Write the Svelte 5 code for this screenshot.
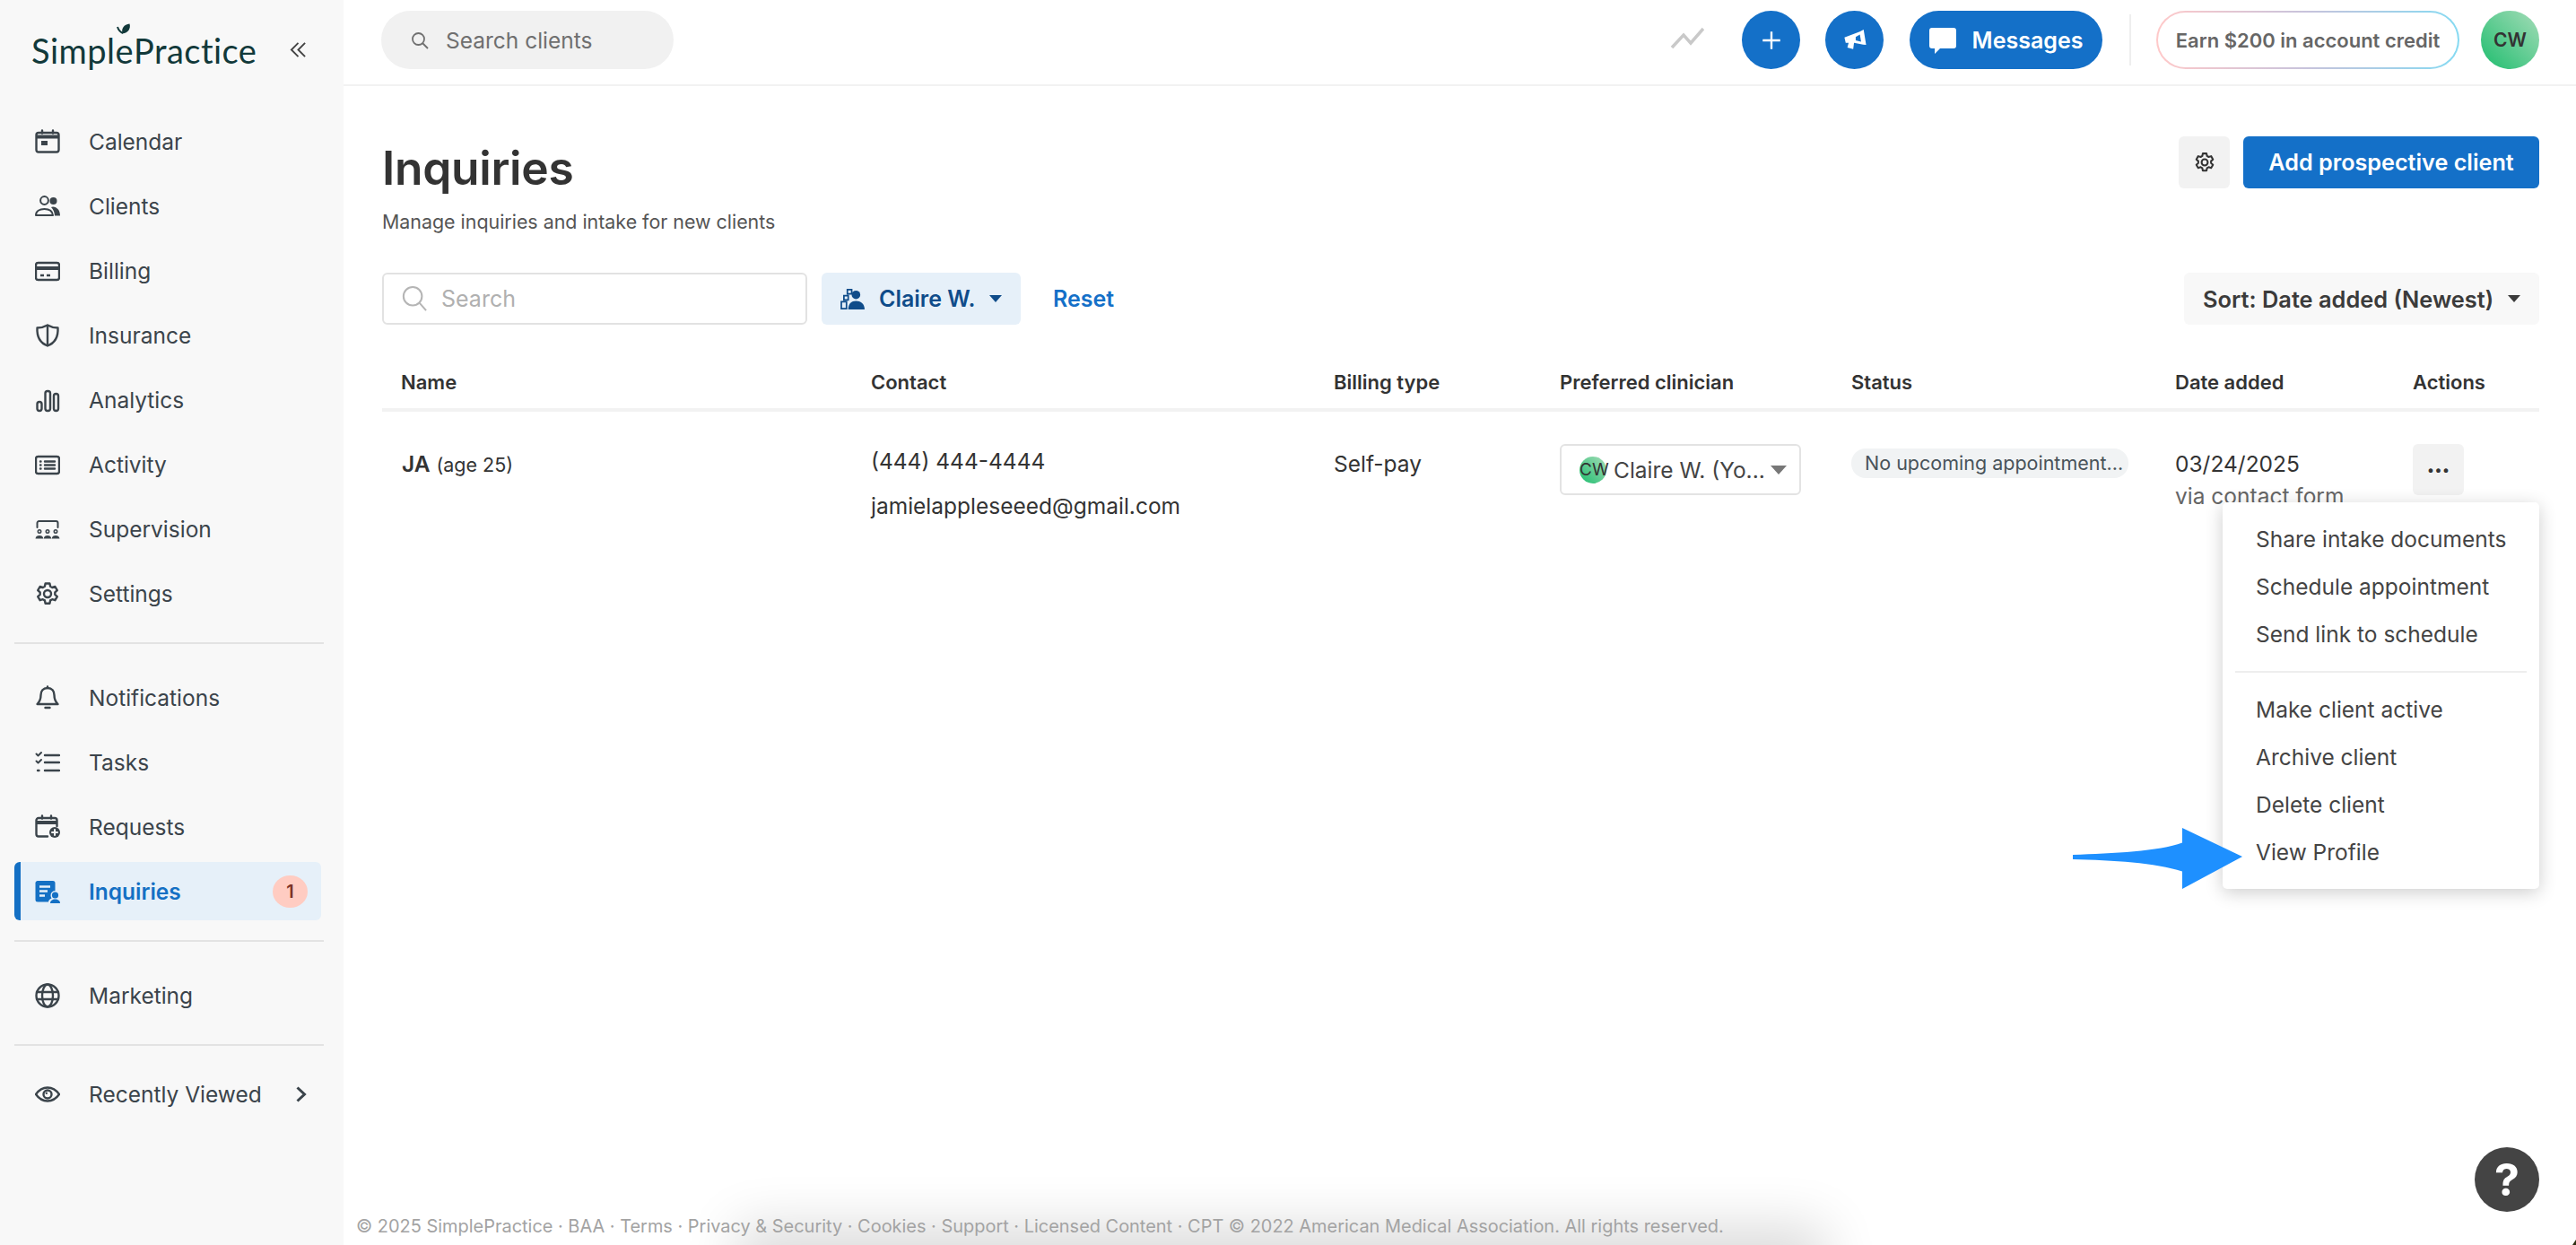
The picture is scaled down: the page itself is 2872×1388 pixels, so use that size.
<script lang="ts">
  const groupOne = [
    { id: 'calendar', label: 'Calendar' },
    { id: 'clients', label: 'Clients' },
    { id: 'billing', label: 'Billing' },
    { id: 'insurance', label: 'Insurance' },
    { id: 'analytics', label: 'Analytics' },
    { id: 'activity', label: 'Activity' },
    { id: 'supervision', label: 'Supervision' },
    { id: 'settings', label: 'Settings' }
  ];
  const groupTwo = [
    { id: 'bell', label: 'Notifications' },
    { id: 'tasks', label: 'Tasks' },
    { id: 'requests', label: 'Requests' },
    { id: 'inquiries', label: 'Inquiries', badge: 1, active: true }
  ];
  const columns = ['Name', 'Contact', 'Billing type', 'Preferred clinician', 'Status', 'Date added', 'Actions'];
  const footerLinks = ['© 2025 SimplePractice', 'BAA', 'Terms', 'Privacy & Security', 'Cookies', 'Support', 'Licensed Content', 'CPT © 2022 American Medical Association. All rights reserved.'];

  let menuOpen = $state(true);
</script>

{#snippet icon(id)}
  <svg class="nav-icon" viewBox="0 0 28 28" fill="none" stroke="currentColor" stroke-width="2.4" stroke-linecap="round" stroke-linejoin="round">
    {#if id === 'calendar'}
      <rect x="1.5" y="4" width="25" height="21.5" rx="2.5" />
      <path d="M1.5 8.5h25" stroke-width="4" stroke-linecap="butt" />
      <path d="M8 1.5v3M20 1.5v3" />
      <rect x="7" y="13" width="7" height="5" fill="currentColor" stroke="none" />
    {:else if id === 'clients'}
      <circle cx="10.500" cy="7.500" r="4.400" stroke-width="2" />
      <path d="M1 24c0-4.500 4-7 9.500-7s9 2.500 9.500 7z" stroke-width="2" />
      <circle cx="20.500" cy="8" r="4" fill="currentColor" stroke="none" />
      <path d="M20 14.500c4.500.5 8 3.500 8 10h-6c-.2-4-1.500-7-4-9.500z" fill="currentColor" stroke="none" />
    {:else if id === 'billing'}
      <rect x="1" y="5" width="26" height="19" rx="2.500" />
      <path d="M1 11h26" stroke-width="4" stroke-linecap="butt" />
      <path d="M6 19h4M13 19h4" stroke-linecap="butt" />
    {:else if id === 'insurance'}
      <path d="M14 2.500c3.500 2 8 3 11.500 3 .5 9.500-3.500 17-11.500 20-8-3-12-10.500-11.500-20 3.500 0 8-1 11.500-3z" />
      <path d="M14 3v22" />
    {:else if id === 'analytics'}
      <rect x="2.500" y="16" width="5" height="10" rx="2.500" />
      <rect x="11.500" y="4" width="5.500" height="22" rx="2.500" />
      <rect x="21" y="7" width="5" height="19" rx="2.500" />
    {:else if id === 'activity'}
      <rect x="1" y="5" width="26" height="19" rx="2.500" />
      <path d="M11 10.500h11M11 14.500h11M11 18.500h11M6 10.500h.5M6 14.500h.5M6 18.500h.5" />
    {:else if id === 'supervision'}
      <path d="M2.500 12V7a2 2 0 0 1 2-2h19a2 2 0 0 1 2 2v5" stroke-width="2" />
      <circle cx="5" cy="16.500" r="1.700" stroke-width="1.600" />
      <circle cx="14" cy="16.500" r="1.700" stroke-width="1.600" />
      <circle cx="23" cy="16.500" r="1.700" stroke-width="1.600" />
      <path d="M.5 24.500c.3-2.500 2-3.500 4.500-3.500s4 1 4.300 3.500zM9.700 24.500c.3-2.500 2-3.500 4.300-3.500s4 1 4.300 3.500zM18.700 24.500c.3-2.500 2-3.500 4.300-3.500s4.200 1 4.500 3.500z" fill="currentColor" stroke="none" />
    {:else if id === 'settings'}
      <path d="M11.600 2.500h4.800l.7 3.300 2.100 1.200 3.200-1 2.400 4.100-2.500 2.300v2.400l2.500 2.300-2.400 4.100-3.200-1-2.100 1.200-.7 3.300h-4.800l-.7-3.300-2.100-1.200-3.200 1-2.400-4.100 2.500-2.300v-2.400L3.200 10.100l2.400-4.100 3.200 1 2.100-1.200z" />
      <circle cx="14" cy="14" r="4" />
    {:else if id === 'bell'}
      <path d="M14 3c-5 0-7.500 3.500-7.500 8 0 5-1.500 7.500-4 10h23c-2.500-2.500-4-5-4-10 0-4.500-2.500-8-7.500-8z" />
      <path d="M14 1.500v1.500M11.500 25h5" />
    {:else if id === 'tasks'}
      <path d="M11 6h16M11 14h16M11 23h16" />
      <path d="M1.500 4.500l2 2 3.500-3.500M1.500 12.500l2 2 3.500-3.500" stroke-width="2" />
      <path d="M3 23h1.500" />
    {:else if id === 'requests'}
      <path d="M14 24.500H4a2.500 2.500 0 0 1-2.500-2.500V6.500A2.500 2.500 0 0 1 4 4h18a2.500 2.500 0 0 1 2.500 2.500V13" />
      <path d="M1.500 9h23" stroke-width="4" stroke-linecap="butt" />
      <path d="M8 1.500v3M18 1.500v3" />
      <circle cx="22" cy="20" r="6" fill="currentColor" stroke="none" />
      <path d="M22 17v6M19 20h6" stroke="#f8f8f8" stroke-width="2" />
    {:else if id === 'inquiries'}
      <path d="M3 2h17a2.500 2.500 0 0 1 2.500 2.500v8.600c-3.200.3-5 2.400-5 5.200 0 1.200.4 2.300 1 3.200-2.200 1-3.300 2.300-3.500 4H3a2.500 2.500 0 0 1-2.500-2.500v-18A2.500 2.500 0 0 1 3 2z" fill="currentColor" stroke="none" />
      <path d="M5 8.500h12M5 13.500h9M5 18.500h6" stroke="#e6f0f9" stroke-linecap="butt" />
      <circle cx="22.500" cy="18" r="3.600" fill="currentColor" stroke="none" />
      <path d="M17 27c0-3 2.500-4.500 5.500-4.500s5.500 1.500 5.500 4.500z" fill="currentColor" stroke="none" />
    {:else if id === 'globe'}
      <circle cx="14" cy="14" r="12.500" />
      <ellipse cx="14" cy="14" rx="6" ry="12.500" />
      <path d="M2 10h24M2 18h24" />
    {:else if id === 'eye'}
      <path d="M1 14c3.500-5 8-7.500 13-7.500s9.500 2.500 13 7.500c-3.500 5-8 7.500-13 7.500S4.500 19 1 14z" />
      <circle cx="14" cy="14" r="4.500" />
      <circle cx="12.800" cy="12.800" r="1.200" fill="currentColor" stroke="none" />
    {/if}
  </svg>
{/snippet}

<div class="shell">
  <aside class="sidebar">
    <div class="brand">
      <span class="logo">Simpl<span class="logo-e">e<svg class="leaf" viewBox="0 0 16 14"><path d="M1 4c1 3.500 3 5.500 6 7" fill="none" stroke="#12393a" stroke-width="2" /><path d="M6.500 11.500C5 6 8 1 14.500.5c1.500 5-1.500 10.500-8 11z" fill="#12393a" /></svg></span>Practice</span>
      <svg class="collapse" viewBox="0 0 20 20" fill="none" stroke="#444" stroke-width="2"><path d="M10 2l-8 8 8 8M18 2l-8 8 8 8" /></svg>
    </div>

    <nav class="group first">
      {#each groupOne as item}
        <a class="item" href="#{item.id}">{@render icon(item.id)}<span>{item.label}</span></a>
      {/each}
    </nav>
    <nav class="group">
      {#each groupTwo as item}
        <a class="item" class:active={item.active} href="#{item.id}">
          {@render icon(item.id)}<span>{item.label}</span>
          {#if item.badge}<b class="badge">{item.badge}</b>{/if}
        </a>
      {/each}
    </nav>
    <nav class="group">
      <a class="item" href="#marketing">{@render icon('globe')}<span>Marketing</span></a>
    </nav>
    <nav class="group last">
      <a class="item" href="#recent">
        {@render icon('eye')}<span>Recently Viewed</span>
        <svg class="chev" viewBox="0 0 14 20" fill="none" stroke="#3b444b" stroke-width="3"><path d="M2.500 2.500l8 7.500-8 7.500" /></svg>
      </a>
    </nav>
  </aside>

  <div class="main">
    <header class="topbar">
      <div class="client-search">
        <svg viewBox="0 0 20 20" fill="none" stroke="#6f6f6f" stroke-width="1.800"><circle cx="8.500" cy="8.500" r="6.500" /><path d="M13 13l6 6" /></svg>
        <span>Search clients</span>
      </div>
      <svg class="spark" viewBox="0 0 38 25" fill="none" stroke="#c9c9c9" stroke-width="3.500"><path d="M2 23L15 9l8 9L37 2" /></svg>
      <button class="round" aria-label="Add">
        <svg viewBox="0 0 24 24" fill="none" stroke="#fff" stroke-width="2.200"><path d="M12 3v18M3 12h18" /></svg>
      </button>
      <button class="round" aria-label="Announcements">
        <svg viewBox="0 0 28 28"><path fill="#fff" d="M1.500 10.500L20 3.500 24.500 1l3 18.500-3.500-.5-11-2-1 7.500-7-2 1.500-5.500H3z" /><path fill="#1470c8" d="M20 7l-5 3v4l6.500 1.500z" /></svg>
      </button>
      <button class="messages">
        <svg viewBox="0 0 30 30" fill="#fff"><path d="M3 1h24a3 3 0 0 1 3 3v17a3 3 0 0 1-3 3H12l-6 6v-6H3a3 3 0 0 1-3-3V4a3 3 0 0 1 3-3z" /></svg>
        Messages
      </button>
      <i class="vr"></i>
      <div class="earn"><span>Earn $200 in account credit</span></div>
      <div class="avatar">CW</div>
    </header>

    <section class="page">
      <div class="title-row">
        <div>
          <h1>Inquiries</h1>
          <p class="sub">Manage inquiries and intake for new clients</p>
        </div>
        <div class="title-actions">
          <button class="icon-btn" aria-label="Settings">
            <svg width="24" height="24" viewBox="0 0 28 28" fill="none" stroke="currentColor" stroke-width="2.400" stroke-linejoin="round">
              <path d="M11.600 2.500h4.800l.7 3.300 2.100 1.200 3.200-1 2.400 4.100-2.500 2.300v2.400l2.500 2.300-2.400 4.100-3.200-1-2.100 1.200-.7 3.300h-4.800l-.7-3.300-2.100-1.200-3.200 1-2.400-4.100 2.500-2.300v-2.400L3.200 10.100l2.400-4.100 3.200 1 2.100-1.200z" />
              <circle cx="14" cy="14" r="4" />
            </svg>
          </button>
          <button class="primary">Add prospective client</button>
        </div>
      </div>

      <div class="filters">
        <div class="search">
          <svg viewBox="0 0 30 32" fill="none" stroke="#b5b5b5" stroke-width="2.200"><circle cx="13" cy="13" r="11" /><path d="M21 21l8 9" /></svg>
          <span>Search</span>
        </div>
        <button class="clinician-filter">
          <svg viewBox="0 0 28 26" fill="#0f4c8a"><circle cx="18" cy="8" r="5" /><path d="M9 25c0-7 4-10 9-10s10 3 10 10z" /><path d="M8 2h5v5H8zM4 9h5v5H4zM1 16h6v8H1z" fill="none" stroke="#0f4c8a" stroke-width="1.800" /></svg>
          Claire W.
          <i class="caret"></i>
        </button>
        <button class="reset">Reset</button>
        <button class="sort">Sort: Date added (Newest)<i class="caret"></i></button>
      </div>

      <div class="table">
        <div class="row head">
          {#each columns as col}<div>{col}</div>{/each}
        </div>
        <div class="row body">
          <div class="name"><b>JA</b> <small>(age 25)</small></div>
          <div class="contact">
            <div>(444) 444-4444</div>
            <div>jamielappleseeed@gmail.com</div>
          </div>
          <div class="billing">Self-pay</div>
          <div>
            <div class="select"><span class="mini">CW</span><span class="sel-text">Claire W. (Yo...</span><i class="caret grey"></i></div>
          </div>
          <div><span class="status">No upcoming appointment...</span></div>
          <div class="date">03/24/2025<small>via contact form</small></div>
          <div class="actions">
            <button class="dots" aria-label="More" onclick={() => (menuOpen = !menuOpen)}>•••</button>
            {#if menuOpen}
              <ul class="menu">
                <li>Share intake documents</li>
                <li>Schedule appointment</li>
                <li>Send link to schedule</li>
                <li class="sep"></li>
                <li>Make client active</li>
                <li>Archive client</li>
                <li>Delete client</li>
                <li>View Profile</li>
              </ul>
              <svg class="arrow" viewBox="0 0 190 70" fill="#1e90ff" preserveAspectRatio="none"><path d="M0 31c45-2 96-4 122-14V0l67 33-67 37V50C92 40 45 37 0 36z" /></svg>
            {/if}
          </div>
        </div>
      </div>
    </section>

    <footer class="foot">{footerLinks.join(' · ')}</footer>
    <div class="foot-shade"></div>
    <button class="help" aria-label="Help">?</button>
    <i class="corner"></i>
  </div>
</div>

<style>
  :global(body) {
    margin: 0;
    background: #fff;
    font-family: Inter, "Liberation Sans", sans-serif;
    color: #333;
  }
  button {
    font: inherit;
    border: 0;
    cursor: pointer;
  }
  .shell {
    display: flex;
    height: 1388px;
    overflow: hidden;
  }
  .sidebar {
    width: 383px;
    flex: none;
    background: #f8f8f8;
    padding: 0 22px 0 16px;
    box-sizing: border-box;
    color: #3b444b;
  }
  .brand {
    height: 111px;
    padding: 0 0 0 19px;
    display: flex;
    align-items: center;
    justify-content: space-between;
  }
  .logo {
    font: 400 38px Lato, sans-serif;
    letter-spacing: 0.47px;
    color: #12393a;
    line-height: 1;
  }
  .logo-e {
    position: relative;
  }
  .leaf {
    position: absolute;
    left: 2px;
    top: -7px;
    width: 16px;
    height: 14px;
  }
  .collapse {
    width: 19px;
    height: 19px;
    margin-right: 19px;
  }
  .group {
    display: flex;
    flex-direction: column;
    gap: 7px;
    padding: 27px 0 22px;
    border-bottom: 2px solid #e3e3e3;
  }
  .group.first {
    padding-top: 14px;
  }
  .group.last {
    border-bottom: 0;
    padding-top: 21px;
  }
  .item {
    height: 65px;
    display: flex;
    align-items: center;
    gap: 32px;
    padding: 0 15px 0 23px;
    box-sizing: border-box;
    border-radius: 6px;
    color: inherit;
    text-decoration: none;
    font-size: 24.500px;
  }
  .nav-icon {
    width: 28px;
    height: 28px;
    flex: none;
  }
  .item.active {
    background: #e6f0f9;
    color: #1470c4;
    font-weight: 600;
    border-left: 7px solid #1470c4;
    padding-left: 16px;
    margin-right: 3px;
  }
  .badge {
    margin-left: auto;
    width: 39px;
    height: 36px;
    border-radius: 50%;
    background: #ffccc2;
    color: #7c3227;
    font-size: 20px;
    font-weight: 600;
    display: grid;
    place-items: center;
  }
  .chev {
    margin-left: auto;
    width: 14px;
    height: 20px;
    margin-right: 3px;
  }

  .main {
    flex: 1;
    min-width: 0;
    display: flex;
    flex-direction: column;
    position: relative;
  }
  .topbar {
    height: 96px;
    flex: none;
    box-sizing: border-box;
    border-bottom: 2px solid #f2f2f2;
    display: flex;
    align-items: flex-start;
    padding: 12px 41px 0 42px;
  }
  .client-search {
    width: 326px;
    height: 65px;
    border-radius: 33px;
    background: #f1f1f1;
    display: flex;
    align-items: center;
    gap: 19px;
    padding-left: 33px;
    box-sizing: border-box;
    font-size: 24.500px;
    color: #6f6f6f;
  }
  .client-search svg {
    width: 20px;
    height: 20px;
  }
  .spark {
    width: 38px;
    height: 25px;
    margin: 18px 42px 0 auto;
  }
  .round {
    width: 65px;
    height: 65px;
    border-radius: 50%;
    background: #1470c8;
    margin-right: 28px;
    display: grid;
    place-items: center;
    padding: 0;
  }
  .round svg {
    width: 26px;
    height: 26px;
  }
  .messages {
    height: 65px;
    width: 215px;
    margin-left: 1px;
    border-radius: 33px;
    background: #1470c8;
    color: #fff;
    font-size: 25px;
    font-weight: 600;
    display: flex;
    align-items: center;
    justify-content: center;
    gap: 18px;
    padding: 0;
  }
  .messages svg {
    width: 30px;
    height: 30px;
  }
  .vr {
    width: 2px;
    height: 57px;
    background: #eee;
    margin: 4px 28px 0 30px;
  }
  .earn {
    width: 338px;
    height: 65px;
    border-radius: 33px;
    padding: 2px;
    box-sizing: border-box;
    background: linear-gradient(90deg, #ffc9c9, #c7c3dc, #86daf2);
  }
  .earn span {
    display: grid;
    place-items: center;
    height: 100%;
    border-radius: 31px;
    background: #fff;
    font-size: 22px;
    font-weight: 600;
    color: #666;
  }
  .avatar {
    width: 65px;
    height: 65px;
    border-radius: 50%;
    margin-left: 24px;
    background: linear-gradient(45deg, #1ebd6e, #a5dcb8);
    display: grid;
    place-items: center;
    font-size: 21px;
    font-weight: 600;
    color: #333;
  }

  .page {
    padding: 0 41px 0 43px;
  }
  .title-row {
    display: flex;
    justify-content: space-between;
    align-items: flex-start;
    height: 208px;
    padding-top: 56px;
    box-sizing: border-box;
  }
  h1 {
    margin: 0;
    font-size: 51.500px;
    font-weight: 600;
    line-height: 70px;
    color: #333;
    letter-spacing: -0.3px;
  }
  .sub {
    margin: 10px 0 0;
    font-size: 21.400px;
    line-height: 30px;
    color: #555;
  }
  .title-actions {
    display: flex;
    gap: 15px;
  }
  .icon-btn {
    width: 57px;
    height: 58px;
    background: #f2f2f2;
    border-radius: 6px;
    color: #333;
    display: grid;
    place-items: center;
    padding: 0;
  }
  .primary {
    width: 330px;
    height: 58px;
    background: #1470c8;
    color: #fff;
    border-radius: 6px;
    font-size: 25.200px;
    font-weight: 600;
    padding: 0;
  }
  .filters {
    display: flex;
    align-items: center;
    height: 58px;
  }
  .search {
    width: 474px;
    height: 58px;
    box-sizing: border-box;
    border: 2px solid #e2e2e2;
    border-radius: 6px;
    display: flex;
    align-items: center;
    gap: 16px;
    padding-left: 20px;
    font-size: 25px;
    color: #b0b0b0;
  }
  .search svg {
    width: 28px;
    height: 30px;
  }
  .clinician-filter {
    width: 222px;
    height: 58px;
    margin-left: 16px;
    background: #e6f0f9;
    color: #0f4c8a;
    border-radius: 6px;
    font-size: 25px;
    font-weight: 600;
    display: flex;
    align-items: center;
    gap: 16px;
    padding: 0 0 0 21px;
  }
  .clinician-filter svg {
    width: 27px;
    height: 25px;
  }
  .caret {
    width: 0;
    height: 0;
    border: 7px solid transparent;
    border-top: 8px solid currentColor;
    border-bottom: 0;
    display: inline-block;
  }
  .reset {
    margin-left: 36px;
    background: none;
    padding: 0;
    color: #1470c8;
    font-size: 25px;
    font-weight: 600;
  }
  .sort {
    margin-left: auto;
    width: 396px;
    height: 58px;
    background: #f8f8f8;
    border-radius: 6px;
    color: #3b3b3b;
    font-size: 25.400px;
    font-weight: 600;
    display: flex;
    align-items: center;
    justify-content: space-between;
    padding: 0 21px;
    box-sizing: border-box;
  }
  .table {
    margin-top: 37px;
  }
  .row {
    display: grid;
    grid-template-columns: 524px 516px 252px 325px 361px 265px 1fr;
  }
  .row > div {
    padding-left: 21px;
    box-sizing: border-box;
  }
  .head {
    height: 60px;
    border-bottom: 4px solid #f2f2f2;
    align-items: center;
    padding-bottom: 2px;
    box-sizing: border-box;
    font-size: 22px;
    font-weight: 600;
    color: #333;
  }
  .body {
    padding-top: 36px;
    font-size: 24.500px;
    color: #333;
  }
  .name {
    padding-top: 7px;
    margin-left: 1px;
  }
  .name b {
    font-weight: 600;
  }
  .name small {
    font-size: 21.500px;
  }
  .contact {
    line-height: 50px;
    margin-top: -6px;
  }
  .billing {
    padding-top: 7px;
  }
  .select {
    width: 269px;
    height: 57px;
    box-sizing: border-box;
    border: 2px solid #e3e3e3;
    border-radius: 6px;
    display: flex;
    align-items: center;
    padding: 0 14px 0 20px;
    color: #444;
  }
  .mini {
    width: 30px;
    height: 30px;
    border-radius: 50%;
    background: linear-gradient(45deg, #1ebd6e, #a5dcb8);
    font-size: 19px;
    display: grid;
    place-items: center;
    flex: none;
    color: #333;
    margin-right: 8px;
  }
  .sel-text {
    white-space: nowrap;
  }
  .caret.grey {
    margin-left: auto;
    color: #777;
    border-width: 9px;
    border-top-width: 10px;
    border-bottom: 0;
  }
  .status {
    display: block;
    width: 309px;
    height: 33px;
    line-height: 33px;
    box-sizing: border-box;
    margin-top: 5px;
    padding: 0 0 0 15px;
    white-space: nowrap;
    border-radius: 16px;
    background: #f1f3f4;
    color: #49535a;
    font-size: 21.500px;
  }
  .date {
    line-height: 34px;
    color: #333;
    margin-top: 5px;
  }
  .date small {
    display: block;
    margin-top: 2px;
    font-size: 24.500px;
    color: #666;
    line-height: 34px;
  }
  .actions {
    position: relative;
    padding-left: 21px;
  }
  .dots {
    width: 57px;
    height: 57px;
    background: #f2f2f2;
    border-radius: 6px;
    font-size: 15px;
    letter-spacing: 0;
    color: #333;
    padding: 0;
    display: block;
  }
  .menu {
    position: absolute;
    right: 0;
    top: 65px;
    width: 353px;
    height: 431px;
    margin: 0;
    padding: 15px 0 0;
    box-sizing: border-box;
    list-style: none;
    background: #fff;
    border-radius: 5px;
    box-shadow: 0 4px 20px rgba(0, 0, 0, 0.2);
    font-size: 24.500px;
    color: #444;
    z-index: 2;
  }
  .menu li {
    height: 53px;
    line-height: 53px;
    padding-left: 37px;
    white-space: nowrap;
  }
  .menu .sep {
    height: 2px;
    margin: 14px 14px 15px;
    padding: 0;
    background: #eee;
  }
  .arrow {
    position: absolute;
    left: -358px;
    top: 428px;
    width: 190px;
    height: 68px;
    z-index: 3;
  }
  .foot {
    margin-top: auto;
    padding: 0 0 9px 14px;
    font-size: 19.950px;
    line-height: 24px;
    color: #a3a3a3;
    position: relative;
    z-index: 1;
  }
  .foot-shade {
    position: absolute;
    left: 460px;
    width: 1170px;
    bottom: -40px;
    height: 40px;
    box-shadow: 0 0 60px 22px rgba(0, 0, 0, 0.14);
  }
  .help {
    position: absolute;
    right: 41px;
    bottom: 37px;
    width: 72px;
    height: 72px;
    padding: 0;
    border-radius: 50%;
    background: #444;
    color: #fff;
    font-size: 50px;
    font-weight: 700;
    line-height: 72px;
  }
  .corner {
    position: absolute;
    right: 0;
    bottom: 0;
    width: 4px;
    height: 6px;
    background: #2e2e12;
    clip-path: polygon(100% 0, 100% 100%, 0 100%);
  }
</style>
